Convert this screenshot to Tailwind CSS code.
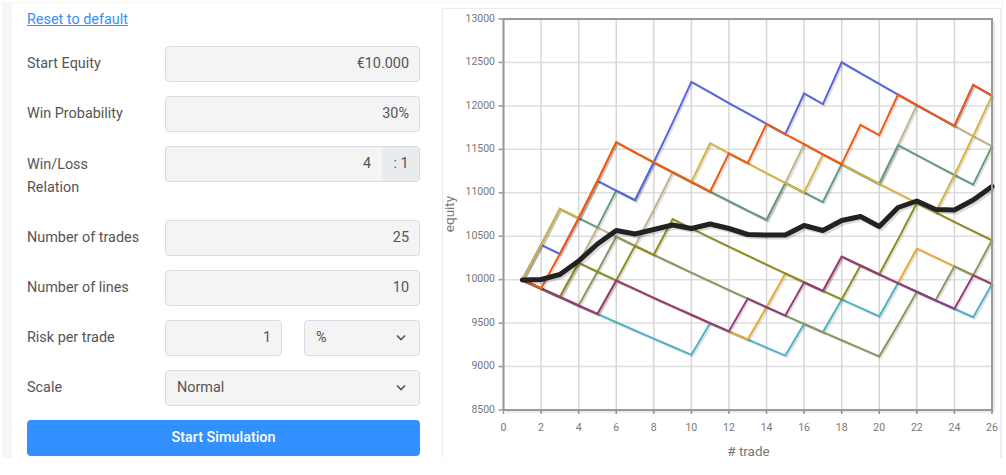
<!DOCTYPE html>
<html lang="en">
<head>
    <meta charset="UTF-8">
    <title>Trading Simulation</title>
    <script src="https://cdn.jsdelivr.net/npm/@tailwindcss/browser@4"></script>
</head>
<body class="bg-white font-['Roboto',sans-serif] text-[14.4px] text-[#555]">
    <div class="ml-[2px] mr-[3px] mt-[2px] h-[456px] overflow-hidden bg-[#f5f6f6] pl-[10px] pr-[2px] pt-[1px]">
        <div class="flex h-full gap-[8px] bg-white">
            <!-- Settings form -->
            <form class="w-[422px] shrink-0 pl-[15px] pr-[14px]">
                <div class="flex h-[43px] items-start pt-[6px]">
                    <a href="#" class="text-[#3390ff] underline">Reset to default</a>
                </div>

                <div class="mb-[14.5px] flex items-start">
                    <label class="w-[138px] pt-[7px] leading-[22.5px]">Start Equity</label>
                    <input type="text" value="€10.000" readonly class="h-[35.5px] flex-1 min-w-0 rounded border border-[#d8dde5] bg-[#f4f4f5] pl-3 pr-[10px] text-right">
                </div>

                <div class="mb-[14.5px] flex items-start">
                    <label class="w-[138px] pt-[7px] leading-[22.5px]">Win Probability</label>
                    <input type="text" value="30%" readonly class="h-[35.5px] flex-1 min-w-0 rounded border border-[#d8dde5] bg-[#f4f4f5] pl-3 pr-[10px] text-right">
                </div>

                <div class="mb-[14.5px] flex h-[59.5px] items-start">
                    <label class="w-[138px] pt-[7px] leading-[23px]">Win/Loss<br>Relation</label>
                    <div class="flex h-[35.5px] flex-1 min-w-0">
                        <input type="text" value="4" readonly class="flex-1 min-w-0 rounded-l border border-r-0 border-[#d8dde5] bg-[#f4f4f5] pl-3 pr-[11px] text-right">
                        <span class="flex w-[38px] items-center justify-center rounded-r border border-l-0 border-[#d8dde5] bg-[#e9ecef] pl-[1px]">: 1</span>
                    </div>
                </div>

                <div class="mb-[14.5px] flex items-start">
                    <label class="w-[138px] pt-[7px] leading-[22.5px]">Number of trades</label>
                    <input type="text" value="25" readonly class="h-[35.5px] flex-1 min-w-0 rounded border border-[#d8dde5] bg-[#f4f4f5] pl-3 pr-[10px] text-right">
                </div>

                <div class="mb-[14.5px] flex items-start">
                    <label class="w-[138px] pt-[7px] leading-[22.5px]">Number of lines</label>
                    <input type="text" value="10" readonly class="h-[35.5px] flex-1 min-w-0 rounded border border-[#d8dde5] bg-[#f4f4f5] pl-3 pr-[10px] text-right">
                </div>

                <div class="mb-[14.5px] flex items-start">
                    <label class="w-[138px] pt-[7px] leading-[22.5px]">Risk per trade</label>
                    <input type="text" value="1" readonly class="h-[35.5px] w-[117px] rounded border border-[#d8dde5] bg-[#f4f4f5] pl-3 pr-[10px] text-right">
                    <div class="relative ml-[22px] flex-1 min-w-0">
                        <select class="h-[35.5px] w-full appearance-none rounded border border-[#d8dde5] bg-[#f4f4f5] px-[11px]">
                            <option>%</option>
                        </select>
                        <svg class="pointer-events-none absolute right-[13px] top-[14px] h-[8px] w-[12px]" viewBox="0 0 12 8" fill="none" stroke="#555" stroke-width="1.6"><path d="M2 1.5l4 4 4-4"/></svg>
                    </div>
                </div>

                <div class="mb-[14.5px] flex items-start">
                    <label class="w-[138px] pt-[7px] leading-[22.5px]">Scale</label>
                    <div class="relative flex-1 min-w-0">
                        <select class="h-[35.5px] w-full appearance-none rounded border border-[#d8dde5] bg-[#f4f4f5] px-[11px]">
                            <option>Normal</option>
                        </select>
                        <svg class="pointer-events-none absolute right-[13px] top-[14px] h-[8px] w-[12px]" viewBox="0 0 12 8" fill="none" stroke="#555" stroke-width="1.6"><path d="M2 1.5l4 4 4-4"/></svg>
                    </div>
                </div>

                <button type="button" class="h-[36px] w-full rounded bg-[#3390ff] font-medium text-white">Start Simulation</button>
            </form>

            <!-- Chart -->
            <div class="mt-[5px] min-w-0 flex-1 border border-b-0 border-[#e8ebef]">
                <svg id="chart" width="559" height="451" class="block overflow-visible font-['Roboto',sans-serif]"></svg>
            </div>
        </div>
    </div>

    <script>
        // W = +4%, L = -1% of equity, one letter per trade
        const series = [
            ['#c0b48c', 'LLWWLLWWLLLLLWWLLLLWWLLLL'],
            ['#4fb3c6', 'LLLLLLLLLWLLLLWLWLLWLLLLW'],
            ['#e9a933', 'LLLLWLLLLLLLWWLLWLLLWLLLL'],
            ['#87985f', 'LLLWWLLLLLLLLLLLLLLWWLWLW'],
            ['#8f8c1e', 'LLWLLWLWLLLLLLLLLWLWWLLLL'],
            ['#96397c', 'LLLLWLLLLLLWLLWLWLLLLLLWL'],
            ['#689a80', 'WWLLWLWLLLLLLWLLWLLWLLLLW'],
            ['#5566e0', 'WLWWLLWWWLLLLLWLWLLLLLLWL'],
            ['#d3b443', 'WWLWWLLLLWLLLLLWLLLLLLWWW'],
            ['#f2590f', 'LWWWWLLLLLWLWLLLLWLWLLLWL'],
        ];
        // average line, read off in pixels
        const meanY = [279, 278.5, 273.5, 260, 243, 229.5, 233, 228.5, 224, 227.5, 223, 227.5, 233.5, 234, 234, 224.5, 229.5, 219.5, 215.5, 225.5, 206.5, 200, 208.5, 209, 199, 185.5];

        // page coordinates of the plot, the svg itself starts at 443,8
        const plotL = 503.5 - 443, plotR = 992 - 443, plotT = 18 - 8, plotB = 409 - 8;
        const px = x => plotL + x * (plotR - plotL) / 26;
        const py = v => plotT + (13000 - v) * (plotB - plotT) / 4500;

        let out = '';
        const line = (x1, y1, x2, y2, color, w) => `<line x1="${x1}" y1="${y1}" x2="${x2}" y2="${y2}" stroke="${color}" stroke-width="${w}"/>`;
        const label = (x, y, text, anchor) => `<text x="${x}" y="${y}" text-anchor="${anchor}" font-size="10.5" fill="#777">${text}</text>`;

        // grid and ticks
        for (let v = 8500; v <= 13000; v += 500) {
            out += line(plotL, py(v), plotR, py(v), '#dedede', 1.5);
            out += line(plotL - 5, py(v), plotL, py(v), '#999', 1.5);
            out += label(plotL - 8.5, py(v) + 2.7, v, 'end');
        }
        for (let x = 0; x <= 26; x += 2) {
            out += line(px(x), plotT, px(x), plotB, '#d6d6d6', 1.5);
            out += line(px(x), plotB, px(x), plotB + 4, '#999', 1.5);
            out += label(px(x), plotB + 21, x, 'middle');
        }

        // simulated lines with their drop shadow
        const polyline = (pts, color, w) => `<polyline points="${pts}" fill="none" stroke="${color}" stroke-width="${w}" stroke-linejoin="miter"/>`;
        for (const [color, trades] of series) {
            let v = 10000;
            const pts = [[px(1), py(v)]];
            [...trades].forEach((t, i) => {
                v *= t === 'W' ? 1.04 : 0.99;
                pts.push([px(i + 2), py(v)]);
            });
            const shadow = pts.map(p => `${p[0] + 1.5},${p[1] + 1.5}`).join(' ');
            out += polyline(shadow, 'rgba(0,0,0,0.12)', 2);
            out += polyline(pts.join(' '), color, 2);
        }
        const meanPts = meanY.map((y, i) => [px(i + 1), y - 8]);
        out += polyline(meanPts.map(p => `${p[0] + 2},${p[1] + 2}`).join(' '), 'rgba(0,0,0,0.15)', 5);
        out += `<polyline points="${meanPts.join(' ')}" fill="none" stroke="#222" stroke-width="5" stroke-linecap="round" stroke-linejoin="round"/>`;

        // plot frame
        out += `<rect x="${plotL}" y="${plotT}" width="${plotR - plotL}" height="${plotB - plotT}" fill="none" stroke="#999" stroke-width="2"/>`;
        out += `<rect x="${plotR + 1}" y="${plotT + 2}" width="2" height="${plotB - plotT}" fill="rgba(0,0,0,0.08)"/>`;
        out += `<rect x="${plotL + 2}" y="${plotB + 1}" width="${plotR - plotL}" height="2" fill="rgba(0,0,0,0.08)"/>`;

        // axis titles
        out += `<text x="${748.5 - 443}" y="${454.5 - 8}" text-anchor="middle" font-size="13.5" fill="#777">&#35; trade</text>`;
        out += `<text transform="translate(${454 - 443},${213 - 8}) rotate(-90)" text-anchor="middle" font-size="13.5" fill="#777">equity</text>`;

        document.getElementById('chart').innerHTML = out;
    </script>
</body>
</html>
